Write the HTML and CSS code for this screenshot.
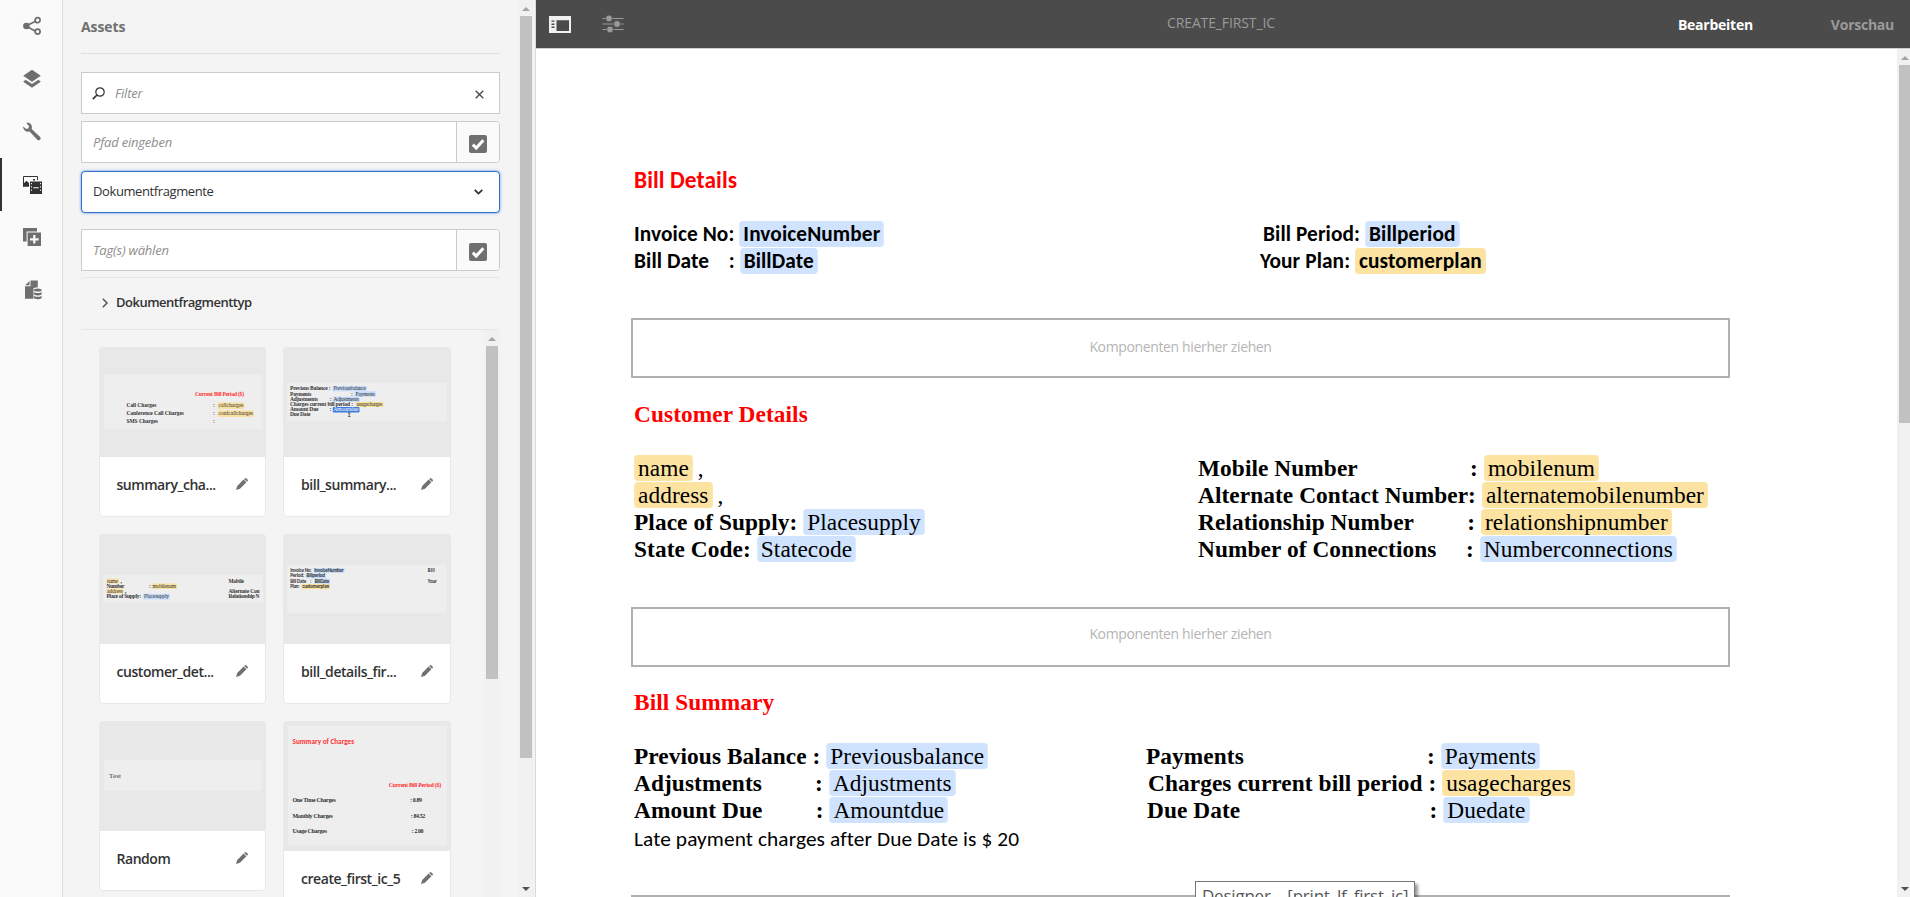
FILE: index.html
```html
<!DOCTYPE html>
<html lang="de">
<head>
<meta charset="utf-8">
<title>CREATE_FIRST_IC</title>
<link rel="stylesheet" href="styles.css">
</head>
<body>
<div class="app">
  <nav class="rail">
    <a class="rail-item"><svg width="20" height="20" viewBox="0 0 20 20"><g fill="none" stroke="currentColor" stroke-width="1.7"><path d="M4 10 14 5M4 10 14 15.5"/><circle cx="15.6" cy="4.2" r="2.5"/><circle cx="15.6" cy="15.6" r="2.5"/></g><circle cx="4.4" cy="10" r="3.3" fill="currentColor"/></svg></a>
    <a class="rail-item"><svg width="20" height="20" viewBox="0 0 20 20" fill="currentColor"><path d="M10 .8 18.8 6.8 10 12.8 1.200 6.800Z"/><path d="M3.600 10.700 10 15 16.400 10.700 18.800 12.700 10 18.800 1.200 12.700Z"/></svg></a>
    <a class="rail-item"><svg width="20" height="20" viewBox="0 0 20 20" fill="currentColor"><path d="M4.300 .9C7.300.1 10.200 2.300 9.900 5.600L9.700 7.100 18.400 15.300C19.400 16.700 17.700 19 15.800 18.200L7.600 9.600C4.300 10.400 1.200 8.200 1.100 4.500L4.300 6.900 6.600 6.300 7 4Z"/></svg></a>
    <a class="rail-item rail-item-active"><svg width="20" height="20" viewBox="0 0 20 20"><path d="M1.500 11.500V1.500H15.500V5" fill="none" stroke="currentColor"/><path d="M1 11.800V9L4.500 5.800 7 8V11.800ZM11 4h2v1.500h-2z" fill="currentColor"/><path d="M8 6.500H20V19H8Z" fill="currentColor"/><path d="M9 8h1v1.300H9zm0 3.200h1v1.300H9zm0 3.200h1v1.300H9zm9-6.400H19v1.300h-1zm0 3.200H19v1.300h-1zm0 3.200H19v1.300h-1zM11.300 12.300h5.500v1h-5.500z" fill="#fafafa"/></svg></a>
    <a class="rail-item"><svg width="20" height="20" viewBox="0 0 20 20" fill="currentColor"><path d="M1 1H15V4.600H4.600V14.500H1Z"/><path fill-rule="evenodd" d="M5.600 5.600H19V19H5.600ZM11.200 8v3.200H8v2.200h3.200v3.200h2.200v-3.200h3.200v-2.200h-3.200V8Z"/></svg></a>
    <a class="rail-item"><svg width="20" height="20" viewBox="0 0 20 20" fill="currentColor"><path d="M8.500.5V6.300H3V18.800H11.500V8.500Q12 7.400 15.800 7.200V.5Z"/><path d="M7.500 1V5.300H3.200Z"/><ellipse cx="15.800" cy="10" rx="3.900" ry="1.600"/><path d="M12 12.200q3.800 1.700 7.700 0v2.200q-3.900 2-7.700 0zM12 16q3.800 1.700 7.700 0v2.200q-3.900 2-7.700 0z"/></svg></a>
  </nav>

  <aside class="panel">
    <div class="panel-body">
      <h2 class="panel-title"><span>Assets</span></h2>
      <div class="field filter">
        <svg width="13" height="13" viewBox="0 0 13 13" fill="none" stroke="#323232"><circle cx="8" cy="5" r="4.200" stroke-width="1.200"/><path d="M5 8 .8 12.200" stroke-width="1.700"/></svg>
        <span class="hint">Filter</span>
        <svg class="clear" width="9" height="9" viewBox="0 0 9 9" fill="none" stroke="#444" stroke-width="1.300"><path d="M.7.7 8.300 8.300M8.300.7.7 8.300"/></svg>
      </div>
      <div class="field picker path">
        <span class="hint">Pfad eingeben</span>
        <span class="pick"><svg width="18" height="18" viewBox="0 0 18 18"><rect width="18" height="18" rx="2" fill="#707070"/><path d="M3.800 9.700 7.200 13 14.300 5.300" fill="none" stroke="#fff" stroke-width="3"/></svg></span>
      </div>
      <div class="field select"><span>Dokumentfragmente</span>
        <svg width="9" height="6" viewBox="0 0 9 6" fill="none" stroke="#323232" stroke-width="1.800"><path d="M.7.8 4.500 4.600 8.300.8"/></svg>
      </div>
      <div class="field picker tags">
        <span class="hint">Tag(s) wählen</span>
        <span class="pick"><svg width="18" height="18" viewBox="0 0 18 18"><rect width="18" height="18" rx="2" fill="#707070"/><path d="M3.800 9.700 7.200 13 14.300 5.300" fill="none" stroke="#fff" stroke-width="3"/></svg></span>
      </div>
      <div class="accordion"><svg width="6" height="10" viewBox="0 0 6 10" fill="none" stroke="#555" stroke-width="1.500"><path d="M.8.8 5 5 .8 9.200"/></svg><span>Dokumentfragmenttyp</span></div>

      <div class="results">
        <div class="cards">
          <div class="column">
            <article class="card">
              <svg class="thumb" width="167" height="110" viewBox="0 0 167 110">
                <rect class="sheet" x="4.800" y="27.300" width="157.400" height="55"/>
                <text class="red" x="95.500" y="48.600" textLength="49">Current Bill Period ($)</text>
                <text x="27" y="60.300" textLength="30">Call Charges</text><text x="113.500" y="60.300">:</text>
                <rect class="gold" x="118" y="55.500" width="27" height="6.500" rx="1"/><text class="val" x="119" y="60.300" textLength="25">callcharges</text>
                <text x="27" y="68.300" textLength="57.500">Conference Call Charges</text><text x="113.500" y="68.300">:</text>
                <rect class="gold" x="118" y="63.500" width="36.500" height="6.500" rx="1"/><text class="val" x="119" y="68.300" textLength="34.500">confcallcharges</text>
                <text x="27" y="76.300" textLength="31.500">SMS Charges</text><text x="113.500" y="76.300">:</text>
              </svg>
              <div class="caption"><span>summary_cha...</span><svg class="pencil" width="12" height="12" viewBox="0 0 12 12"><path d="M0 12 1.200 8 7.600 1.500 10.400 4.300 4 10.800ZM8.200.9 9.200 0Q12 .8 12 2.800L11 3.700Z"/></svg></div>
            </article>
            <article class="card">
              <svg class="thumb" width="167" height="110" viewBox="0 0 167 110">
                <rect class="sheet" x="3.500" y="41" width="160" height="27.300"/>
                <rect class="gold" x="7" y="44.500" width="12.500" height="5" /><text class="val" x="7.500" y="48.700" textLength="11">name</text><text x="21" y="48.700">,</text>
                <text x="129" y="48.700" textLength="15.500">Mobile</text>
                <text x="7" y="53.700" textLength="18">Number</text><text x="49.500" y="53.700">:</text>
                <rect class="gold" x="52" y="49.500" width="25.500" height="5.500"/><text class="val" x="53" y="53.700" textLength="23.500">mobilenum</text>
                <rect class="gold" x="7" y="54.500" width="17" height="5"/><text class="val" x="7.500" y="58.700" textLength="16">address</text><text x="25.500" y="58.700">,</text>
                <text x="129" y="58.700" textLength="31">Alternate Con</text>
                <text x="7" y="64" textLength="34.500">Place of Supply:</text>
                <rect class="blue" x="43.800" y="59.800" width="26.500" height="5.700"/><text class="val" x="44.500" y="64" textLength="25">Placesupply</text>
                <text x="129" y="64" textLength="31">Relationship N</text>
              </svg>
              <div class="caption"><span>customer_det...</span><svg class="pencil" width="12" height="12" viewBox="0 0 12 12"><path d="M0 12 1.200 8 7.600 1.500 10.400 4.300 4 10.800ZM8.200.9 9.200 0Q12 .8 12 2.800L11 3.700Z"/></svg></div>
            </article>
            <article class="card">
              <svg class="thumb" width="167" height="110" viewBox="0 0 167 110">
                <rect class="sheet" x="4.800" y="38.700" width="157.400" height="31"/>
                <text class="test" x="9.500" y="57.300" textLength="12">Test</text>
              </svg>
              <div class="caption"><span>Random</span><svg class="pencil" width="12" height="12" viewBox="0 0 12 12"><path d="M0 12 1.200 8 7.600 1.500 10.400 4.300 4 10.800ZM8.200.9 9.200 0Q12 .8 12 2.800L11 3.700Z"/></svg></div>
            </article>
          </div>
          <div class="column">
            <article class="card">
              <svg class="thumb" width="167" height="110" viewBox="0 0 167 110">
                <rect class="sheet" x="3.700" y="35.700" width="159.600" height="38.500"/>
                <text x="6.500" y="43.300" textLength="40.500">Previous Balance :</text><rect class="blue" x="49" y="39" width="34.500" height="5.300"/><text class="val" x="50" y="43.300" textLength="32.500">Previousbalance</text>
                <text x="6.500" y="48.500" textLength="21.500">Payments</text><text x="67.500" y="48.500">:</text><rect class="blue" x="71" y="44.300" width="21.500" height="5.300"/><text class="val" x="72" y="48.500" textLength="19.500">Payments</text>
                <text x="6.500" y="53.700" textLength="28">Adjustments</text><text x="46" y="53.700">:</text><rect class="blue" x="49.300" y="49.600" width="27" height="5.300"/><text class="val" x="50" y="53.700" textLength="25.500">Adjustments</text>
                <text x="6.500" y="59" textLength="63">Charges current bill period :</text><rect class="gold" x="72" y="54.900" width="28" height="5.200"/><text class="val" x="73" y="59" textLength="26">usagecharges</text>
                <text x="6.500" y="64.200" textLength="28.500">Amount Due</text><text x="46" y="64.200">:</text><rect fill="#3a7bdc" x="49.300" y="60.100" width="26.700" height="5.300" rx="1"/><text class="val white" x="50" y="64.200" textLength="25">Amountdue</text>
                <text x="6.500" y="69.300" textLength="20.500">Due Date</text><path d="M64.500 66h2.500M65.700 66v3.500M64.500 69.500h2.500" stroke="#333" stroke-width=".7"/>
              </svg>
              <div class="caption"><span>bill_summary...</span><svg class="pencil" width="12" height="12" viewBox="0 0 12 12"><path d="M0 12 1.200 8 7.600 1.500 10.400 4.300 4 10.800ZM8.200.9 9.200 0Q12 .8 12 2.800L11 3.700Z"/></svg></div>
            </article>
            <article class="card">
              <svg class="thumb sans" width="167" height="110" viewBox="0 0 167 110">
                <rect class="sheet" x="3.700" y="30.700" width="159.600" height="48"/>
                <text x="6.700" y="38" textLength="21.500">Invoice No:</text><rect class="blue" x="30" y="34" width="31" height="5"/><text x="30.700" y="38" textLength="29.500">InvoiceNumber</text><text x="144.300" y="38" textLength="7">Bill</text>
                <text x="6.700" y="43.300" textLength="14">Period:</text><rect class="blue" x="22.300" y="39.400" width="20" height="5"/><text x="23" y="43.300" textLength="18.500">Billperiod</text>
                <text x="6.700" y="48.700" textLength="16">Bill Date</text><text x="26.500" y="48.700">:</text><rect class="blue" x="30.500" y="44.600" width="16" height="5"/><text x="31.200" y="48.700" textLength="14.500">BillDate</text><text x="144.300" y="48.700" textLength="9">Your</text>
                <text x="6.700" y="54" textLength="9.500">Plan:</text><rect class="gold" x="18" y="50" width="28.300" height="5.200"/><text x="18.700" y="54" textLength="27">customerplan</text>
              </svg>
              <div class="caption"><span>bill_details_fir...</span><svg class="pencil" width="12" height="12" viewBox="0 0 12 12"><path d="M0 12 1.200 8 7.600 1.500 10.400 4.300 4 10.800ZM8.200.9 9.200 0Q12 .8 12 2.800L11 3.700Z"/></svg></div>
            </article>
            <article class="card">
              <svg class="thumb large" width="167" height="130" viewBox="0 0 167 130">
                <rect class="sheet" x="4.300" y="4.700" width="159" height="119.600"/>
                <text class="red head" x="9" y="22.700" textLength="61.500">Summary of Charges</text>
                <text class="red" x="105.300" y="66.300" textLength="52.500">Current Bill Period ($)</text>
                <text x="9" y="81.300" textLength="43.300">One Time Charges</text><text x="126.500" y="81.300" textLength="12">: 0.89</text>
                <text x="9" y="96.500" textLength="40.300">Monthly Charges</text><text x="127.300" y="96.500" textLength="14.500">: 84.52</text>
                <text x="9" y="111.500" textLength="34.500">Usage Charges</text><text x="128" y="111.500" textLength="12">: 2.00</text>
              </svg>
              <div class="caption"><span>create_first_ic_5</span><svg class="pencil" width="12" height="12" viewBox="0 0 12 12"><path d="M0 12 1.200 8 7.600 1.500 10.400 4.300 4 10.800ZM8.200.9 9.200 0Q12 .8 12 2.800L11 3.700Z"/></svg></div>
            </article>
          </div>
        </div>
        <div class="scrollbar inner-bar"><i class="arrow-up"></i><i class="grip inner-grip"></i></div>
      </div>
    </div>
    <div class="scrollbar panel-bar"><i class="arrow-up"></i><i class="grip panel-grip"></i><i class="arrow-down"></i></div>
  </aside>

  <main class="editor">
    <header class="topbar">
      <svg class="toggle" width="22" height="17" viewBox="0 0 22 17"><path fill="#f0f0f0" fill-rule="evenodd" d="M0 0H22V17H0ZM7.500 4.200V15H20V4.200ZM2.500 4.500v1.300H5.500V4.500zM2.500 7.600v1.300H5.500V7.600zM2.500 10.500v1.500H5.500v-1.500z"/></svg>
      <svg class="sliders" width="22" height="18" viewBox="0 0 22 18" fill="#9a9a9a"><path d="M.5 3h21v1H.5zM.5 8.500h21v1H.5zM.5 14h21v1H.5z"/><g stroke="#4b4b4b" stroke-width=".8"><circle cx="7" cy="3.400" r="3.400"/><circle cx="15" cy="9" r="3.400"/><circle cx="8" cy="14.500" r="3.400"/></g></svg>
      <span class="doc-name">CREATE_FIRST_IC</span>
      <span class="mode mode-active">Bearbeiten</span>
      <span class="mode">Vorschau</span>
    </header>
    <div class="viewport">
      <div class="page">
        <section class="fragment calibri bill-details">
          <h3>Bill Details</h3>
          <div class="cols">
            <div class="left"><p>Invoice No: <b class="chip">InvoiceNumber</b></p><p>Bill Date&nbsp;&nbsp;&nbsp;&nbsp;: <b class="chip">BillDate</b></p></div>
            <div><p class="in3">Bill Period: <b class="chip">Billperiod</b></p><p>Your Plan: <b class="chip local">customerplan</b></p></div>
          </div>
        </section>
        <div class="drop">Komponenten hierher ziehen</div>
        <section class="fragment times customer">
          <h3>Customer Details</h3>
          <div class="cols">
            <div class="left"><p class="plain"><span class="chip local">name</span> ,</p><p class="plain"><span class="chip local">address</span> ,</p><p>Place of Supply: <span class="chip">Placesupply</span></p><p>State Code: <span class="chip">Statecode</span></p></div>
            <div><p>Mobile Number&nbsp;&nbsp;&nbsp;&nbsp;&nbsp;&nbsp;&nbsp;&nbsp;&nbsp;&nbsp;&nbsp;&nbsp;&nbsp;&nbsp;&nbsp;&nbsp;&nbsp;&nbsp;&nbsp;: <span class="chip local">mobilenum</span></p><p>Alternate Contact Number: <span class="chip local">alternatemobilenumber</span></p><p>Relationship Number&nbsp;&nbsp;&nbsp;&nbsp;&nbsp;&nbsp;&nbsp;&nbsp;&nbsp;: <span class="chip local">relationshipnumber</span></p><p>Number of Connections&nbsp;&nbsp;&nbsp;&nbsp;&nbsp;: <span class="chip">Numberconnections</span></p></div>
          </div>
        </section>
        <div class="drop drop-second">Komponenten hierher ziehen</div>
        <section class="fragment times summary">
          <h3>Bill Summary</h3>
          <div class="cols">
            <div class="left"><p>Previous Balance : <span class="chip">Previousbalance</span></p><p>Adjustments&nbsp;&nbsp;&nbsp;&nbsp;&nbsp;&nbsp;&nbsp;&nbsp;&nbsp;: <span class="chip">Adjustments</span></p><p>Amount Due&nbsp;&nbsp;&nbsp;&nbsp;&nbsp;&nbsp;&nbsp;&nbsp;&nbsp;: <span class="chip">Amountdue</span></p></div>
            <div><p>Payments&nbsp;&nbsp;&nbsp;&nbsp;&nbsp;&nbsp;&nbsp;&nbsp;&nbsp;&nbsp;&nbsp;&nbsp;&nbsp;&nbsp;&nbsp;&nbsp;&nbsp;&nbsp;&nbsp;&nbsp;&nbsp;&nbsp;&nbsp;&nbsp;&nbsp;&nbsp;&nbsp;&nbsp;&nbsp;&nbsp;&nbsp;: <span class="chip">Payments</span></p><p class="in2">Charges current bill period : <span class="chip local">usagecharges</span></p><p class="in1">Due Date&nbsp;&nbsp;&nbsp;&nbsp;&nbsp;&nbsp;&nbsp;&nbsp;&nbsp;&nbsp;&nbsp;&nbsp;&nbsp;&nbsp;&nbsp;&nbsp;&nbsp;&nbsp;&nbsp;&nbsp;&nbsp;&nbsp;&nbsp;&nbsp;&nbsp;&nbsp;&nbsp;&nbsp;&nbsp;&nbsp;&nbsp;&nbsp;: <span class="chip">Duedate</span></p></div>
          </div>
          <p class="late">Late payment charges after Due Date is $ 20</p>
        </section>
        <div class="drop drop-third"></div>
      </div>
      <div class="scrollbar doc-bar"><i class="arrow-up"></i><i class="grip doc-grip"></i><i class="arrow-down"></i></div>
      <div class="tooltip">Designer – [print_lf_first_ic]</div>
    </div>
  </main>
</div>
</body>
</html>
```
FILE: styles.css
```css
* { box-sizing: border-box; }
body { margin: 0; overflow: hidden; font: 14px "Open Sans", "Noto Sans", sans-serif; color: #323232; }
h2, h3, p { margin: 0; }
svg { display: block; flex: none; }
.app { display: flex; width: 1910px; height: 897px; overflow: hidden; }

/* icon rail */
.rail { width: 63px; background: #fafafa; border-right: 1px solid #dcdcdc; color: #6f6f6f; flex: none; }
.rail-item { display: flex; height: 52.75px; align-items: center; padding-left: 20px; border-left: 2px solid transparent; }
.rail-item-active { border-left-color: #323232; color: #323232; }

/* asset panel */
.panel { display: flex; width: 473px; flex: none; background: #f4f4f4; border-right: 1px solid #dadada; height: 897px; }
.panel-body { width: 419px; margin: 0 18px; flex: none; }
.panel-title { height: 54px; border-bottom: 1px solid #dfdfdf; font-size: 14px; line-height: 54px; font-weight: 700; letter-spacing: -.1px; color: #6f6f6f; }
.field { display: flex; align-items: center; height: 42px; background: #fff; border: 1px solid #cbcbcb; font-size: 13px; }
.filter { margin-top: 18px; padding: 0 15px 0 10px; }
.filter .hint { margin: 0 auto 0 10px; }
.filter .clear { margin-top: 3px; }
.hint { font-style: italic; letter-spacing: -.2px; color: #8e8e8e; }
.picker { padding-left: 11px; justify-content: space-between; border-radius: 0 4px 4px 0; }
.path { margin-top: 7px; }
.pick { display: flex; align-items: center; justify-content: center; width: 43px; height: 40px; background: #fafafa; border-left: 1px solid #cbcbcb; border-radius: 0 3px 3px 0; padding-top: 4px; }
.select { margin-top: 8px; padding: 0 16px 2px 11px; justify-content: space-between; border: 1px solid #326ec8; border-radius: 4px; box-shadow: 0 0 3px #5b93e6; letter-spacing: -.4px; }
.select svg { margin-top: 2px; }
.tags { margin-top: 16px; }
.accordion { display: flex; align-items: center; gap: 8px; height: 53px; margin-top: 6px; padding: 0 0 1px 21px; border-top: 1px solid #e6e6e6; border-bottom: 1px solid #e6e6e6; border-radius: 3px; font-size: 13px; font-weight: 600; letter-spacing: -.5px; }
.accordion span { position: relative; top: -1px; }
.results { display: flex; justify-content: space-between; height: 567px; overflow: hidden; }
.cards { display: flex; gap: 17px; padding: 17px 0 0 17.500px; }
.column { display: flex; flex-direction: column; gap: 17px; }
.card { width: 167.500px; flex: none; background: #fff; border-radius: 4px; outline: 1px solid #e8e8e8; outline-offset: -1px; overflow: hidden; }
.thumb { background: #e8e8e8; font: bold 5.500px "Liberation Serif", serif; width: 168px; }
.thumb text { fill: #333; }
.thumb.sans { font: bold 5px Carlito, Lato, sans-serif; }
.thumb .sheet { fill: #eee; }
.thumb .val { font-weight: 400; }
.thumb .white { fill: #fff; }
.thumb .red { fill: #ff3030; }
.thumb.large { font-size: 6px; }
.thumb .head { font: bold 7.200px Carlito, Lato, sans-serif; }
.thumb .test { font-size: 7px; font-weight: 400; }
.thumb .gold { fill: #f9e0a0; }
.thumb .blue { fill: #c5dcfa; }
.caption { display: flex; align-items: center; justify-content: space-between; height: 60px; padding: 0 18px; font-weight: 600; letter-spacing: -.45px; }
.caption span { position: relative; top: -3px; }
.pencil { fill: #707070; position: relative; top: -3.500px; }

/* scrollbars */
.scrollbar { display: flex; flex-direction: column; align-items: center; background: #f1f1f1; width: 16px; flex: none; }
.grip { width: 12px; background: #c1c1c1; flex: none; }
.arrow-up { border: 4px solid transparent; border-top: 0; border-bottom-color: #a3a3a3; margin: 7px 0 5px; }
.arrow-down { border: 4px solid transparent; border-bottom: 0; border-top-color: #505050; margin: auto 0 6px; }
.inner-grip { height: 333px; }
.panel-grip { height: 742px; }
.doc-bar { margin-right: -3px; }
.doc-grip { height: 358px; }

/* editor */
.editor { flex: 1; min-width: 0; background: #fff; }
.topbar { display: flex; align-items: center; height: 49px; background: #4b4b4b; border-bottom: 1px solid #d0d0d0; padding: 0 16px 0 13px; color: #9a9a9a; }
.sliders { margin-left: 31px; }
.doc-name { margin-left: 543px; letter-spacing: -.12px; position: relative; top: -1.500px; }
.mode { font-weight: 700; letter-spacing: -.25px; margin-left: 78px; }
.mode-active { margin-left: auto; color: #fff; }
.viewport { display: flex; justify-content: space-between; height: 848px; position: relative; overflow: hidden; }
.page { width: 1099px; margin-left: 95px; flex: none; }
.fragment { padding-left: 3px; color: #000; white-space: nowrap; }
.fragment h3 { color: #f00; font-size: 23.330px; line-height: 27px; height: 27px; }
.calibri { font: bold 21.330px/26px Carlito, Lato, sans-serif; letter-spacing: .1px; }
.times { font: bold 23.330px/26px "Liberation Serif", serif; letter-spacing: .08px; }
.fragment p { height: 27px; }
.cols { display: flex; }
.left { flex: none; }
.chip { display: inline-block; height: 26px; padding: 0 3px; border: solid #dceafd; border-width: 0 1px; background: #cfe3ff; border-radius: 4px; vertical-align: top; }
.chip.local { background: #fce3a1; border-color: #fbe6b0; }
.times .chip, .plain { font-weight: 400; }
.plain { word-spacing: -1px; }
.bill-details { padding-top: 118px; height: 269px; }
.bill-details .cols { padding-top: 27px; }
.bill-details .left { width: 626px; }
.drop { height: 60px; border: 2px solid #b0b0b0; text-align: center; line-height: 53px; letter-spacing: -.36px; color: #b5b5b5; }
.drop-second { line-height: 49px; }
.customer { height: 229px; padding-top: 23px; }
.customer .cols { padding-top: 27px; }
.customer .left { width: 564px; }
.summary { height: 228px; padding-top: 22px; }
.summary .cols { padding-top: 27px; }
.summary .left { width: 512px; }
.late { font: 21.330px/26px Carlito, Lato, sans-serif; letter-spacing: .1px; padding-top: 2px; }
.in1 { padding-left: 1px; }
.in2 { padding-left: 2px; }
.in3 { padding-left: 3px; }
.tooltip { position: absolute; left: 659px; top: 832px; width: 220px; height: 34px; padding: 0 6px; border: 1px solid #767676; background: #fff; box-shadow: 3px 3px 3px rgba(0,0,0,.4); color: #575757; font-size: 17px; line-height: 27px; letter-spacing: -.22px; white-space: nowrap; }
```
